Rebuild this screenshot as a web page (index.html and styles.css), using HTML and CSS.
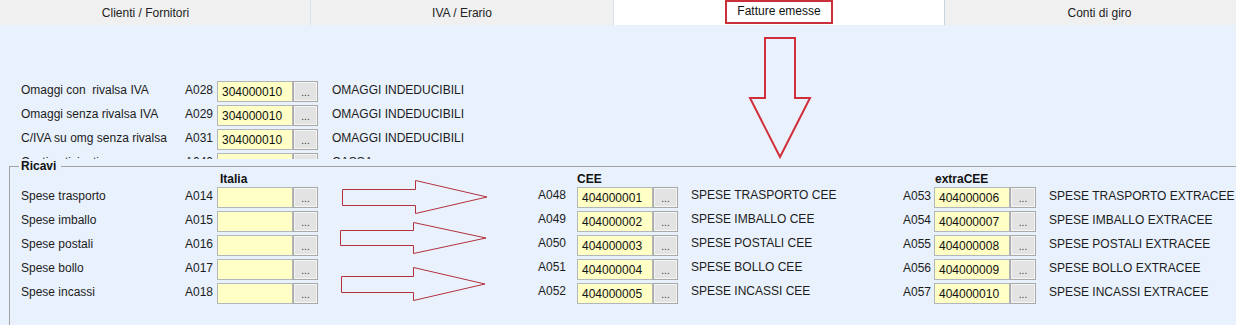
FILE: index.html
```html
<!DOCTYPE html>
<html lang="it">
<head>
<meta charset="utf-8">
<title>Fatture emesse</title>
<link rel="stylesheet" href="styles.css">
</head>
<body>
<div class="tabs">
  <div class="tab tab-first">Clienti / Fornitori</div>
  <div class="tab tab-second">IVA / Erario</div>
  <div class="tab tab-active"><span class="marker">Fatture emesse</span></div>
  <div class="tab tab-last">Conti di giro</div>
</div>

<div class="page">
  <div class="panel">
    <div class="grid-top">
      <div class="lbl">Omaggi con &nbsp;rivalsa IVA</div><div class="code">A028</div><div class="field">304000010</div><div class="btn">...</div><div class="desc">OMAGGI INDEDUCIBILI</div>
      <div class="lbl">Omaggi senza rivalsa IVA</div><div class="code">A029</div><div class="field">304000010</div><div class="btn">...</div><div class="desc">OMAGGI INDEDUCIBILI</div>
      <div class="lbl">C/IVA su omg senza rivalsa</div><div class="code">A031</div><div class="field">304000010</div><div class="btn">...</div><div class="desc">OMAGGI INDEDUCIBILI</div>
      <div class="lbl">Costi anticipati</div><div class="code">A040</div><div class="field"></div><div class="btn">...</div><div class="desc">CASSA</div>
    </div>
  </div>

  <fieldset class="ricavi">
    <legend>Ricavi</legend>
    <div class="ric-head">
      <div class="hdr h-ita">Italia</div>
      <div class="hdr h-cee">CEE</div>
      <div class="hdr h-ext">extraCEE</div>
    </div>
    <div class="grid-ric">
      <div class="lbl">Spese trasporto</div><div class="code">A014</div><div class="field"></div><div class="btn">...</div><div></div>
      <div class="code code2">A048</div><div class="field">404000001</div><div class="btn">...</div><div class="desc up">SPESE TRASPORTO CEE</div>
      <div class="code">A053</div><div class="field">404000006</div><div class="btn">...</div><div class="desc">SPESE TRASPORTO EXTRACEE</div>

      <div class="lbl">Spese imballo</div><div class="code">A015</div><div class="field"></div><div class="btn">...</div><div></div>
      <div class="code code2">A049</div><div class="field">404000002</div><div class="btn">...</div><div class="desc up">SPESE IMBALLO CEE</div>
      <div class="code">A054</div><div class="field">404000007</div><div class="btn">...</div><div class="desc">SPESE IMBALLO EXTRACEE</div>

      <div class="lbl">Spese postali</div><div class="code">A016</div><div class="field"></div><div class="btn">...</div><div></div>
      <div class="code code2">A050</div><div class="field">404000003</div><div class="btn">...</div><div class="desc up">SPESE POSTALI CEE</div>
      <div class="code">A055</div><div class="field">404000008</div><div class="btn">...</div><div class="desc">SPESE POSTALI EXTRACEE</div>

      <div class="lbl">Spese bollo</div><div class="code">A017</div><div class="field"></div><div class="btn">...</div><div></div>
      <div class="code code2">A051</div><div class="field">404000004</div><div class="btn">...</div><div class="desc up">SPESE BOLLO CEE</div>
      <div class="code">A056</div><div class="field">404000009</div><div class="btn">...</div><div class="desc">SPESE BOLLO EXTRACEE</div>

      <div class="lbl">Spese incassi</div><div class="code">A018</div><div class="field"></div><div class="btn">...</div><div></div>
      <div class="code code2">A052</div><div class="field">404000005</div><div class="btn">...</div><div class="desc up">SPESE INCASSI CEE</div>
      <div class="code">A057</div><div class="field">404000010</div><div class="btn">...</div><div class="desc">SPESE INCASSI EXTRACEE</div>
    </div>
  </fieldset>
</div>

<svg class="annot" width="1236" height="325" viewBox="0 0 1236 325" aria-hidden="true">
  <path class="down" d="M765 38 H795 V98 H810 L780 157 L750 98 H765 Z"/>
  <path class="right" d="M342.5 189.5 H415.5 V180.5 L487 197 L415.5 213.5 V205.5 H342.5 Z"/>
  <path class="right" d="M340.5 230.5 H413.5 V222.5 L486 238 L413.5 253.5 V245.5 H340.5 Z"/>
  <path class="right" d="M341.5 276.5 H413.5 V267.5 L485 284 L413.5 300.5 V292.5 H341.5 Z"/>
</svg>
</body>
</html>
```

FILE: styles.css
```css
* { box-sizing: border-box; }

html, body {
  margin: 0;
  padding: 0;
}

body {
  width: 1236px;
  height: 325px;
  overflow: hidden;
  background: #e9f1fc;
  font-family: "Liberation Sans", Arial, sans-serif;
  font-size: 12px;
  color: #1c1c1c;
  position: relative;
}

/* ---------- tabs ---------- */
.tabs {
  display: flex;
  height: 25px;
  overflow: hidden;
  background: #f0f0f0;
}

.tab {
  flex: none;
  height: 25px;
  display: flex;
  justify-content: center;
  align-items: center;
  padding-top: 1px;
  background: #f0f0f0;
  border-right: 1px solid #d6e0ee;
  color: #222;
}

.tab-first { width: 330px; margin-left: -19px; }
.tab-second { width: 303px; }
.tab-active {
  width: 331px;
  background: #ffffff;
  align-items: flex-start;
  padding-top: 0;
  border-right: 1px solid #c9d3df;
}
.tab-last { width: 310px; }

.marker {
  display: block;
  height: 24px;
  width: 108px;
  border: 2px solid #c9303c;
  text-align: center;
  line-height: 18px;
  color: #111;
}

/* ---------- top panel ---------- */
.panel {
  height: 134px;
  overflow: hidden;
  padding: 55px 0 0 21px;
}

.grid-top {
  display: grid;
  grid-template-columns: 164px 32px 76px 25px auto;
  grid-auto-rows: 24px;
}

.lbl, .code, .desc {
  height: 21px;
  margin-top: 1px;
  line-height: 19px;
  white-space: nowrap;
}

.desc { padding-left: 14px; }

.field {
  height: 21px;
  margin-top: 1px;
  background: #ffffc6;
  border: 1px solid #b2b6bd;
  padding: 3px 0 0 4px;
  line-height: 15px;
  color: #111;
}

.btn {
  height: 21px;
  margin-top: 1px;
  background: #e3e3e3;
  border: 1px solid #a9a9a9;
  box-shadow: inset 0 0 0 1px #f4f4f4;
  text-align: center;
  font-size: 10px;
  line-height: 22px;
  color: #333;
}

/* ---------- ricavi ---------- */
.ricavi {
  margin: 0 0 0 9px;
  padding: 0 0 0 11px;
  border: 1px solid #a3a3a3;
  border-right: none;
  border-bottom: none;
  min-height: 180px;
}

.ricavi legend {
  margin-left: -2px;
  padding: 0 5px 0 2px;
  font-weight: bold;
  font-size: 12px;
  line-height: 14px;
  color: #111;
}

.ric-head,
.grid-ric {
  display: grid;
  grid-template-columns: 164px 32px 76px 25px 220px 39px 76px 25px 225px 31px 76px 26px auto;
}

.ric-head {
  height: 13px;
}

.grid-ric {
  grid-auto-rows: 24px;
}

.hdr {
  grid-row: 1;
  font-weight: bold;
  line-height: 13px;
  height: 13px;
  color: #111;
}
.h-ita { grid-column: 3; padding-left: 3px; }
.h-cee { grid-column: 7; }
.h-ext { grid-column: 11; padding-left: 1px; }

.grid-ric .desc { padding-left: 13px; }
.up { line-height: 17px; }
.code2 { line-height: 17px; }

/* ---------- annotation overlay ---------- */
.annot {
  position: absolute;
  left: 0;
  top: 0;
  pointer-events: none;
}

.annot path { fill: none; }
.down { stroke: #d22f3d; stroke-width: 2; }
.right { stroke: #b3313e; stroke-width: 1; }
```
